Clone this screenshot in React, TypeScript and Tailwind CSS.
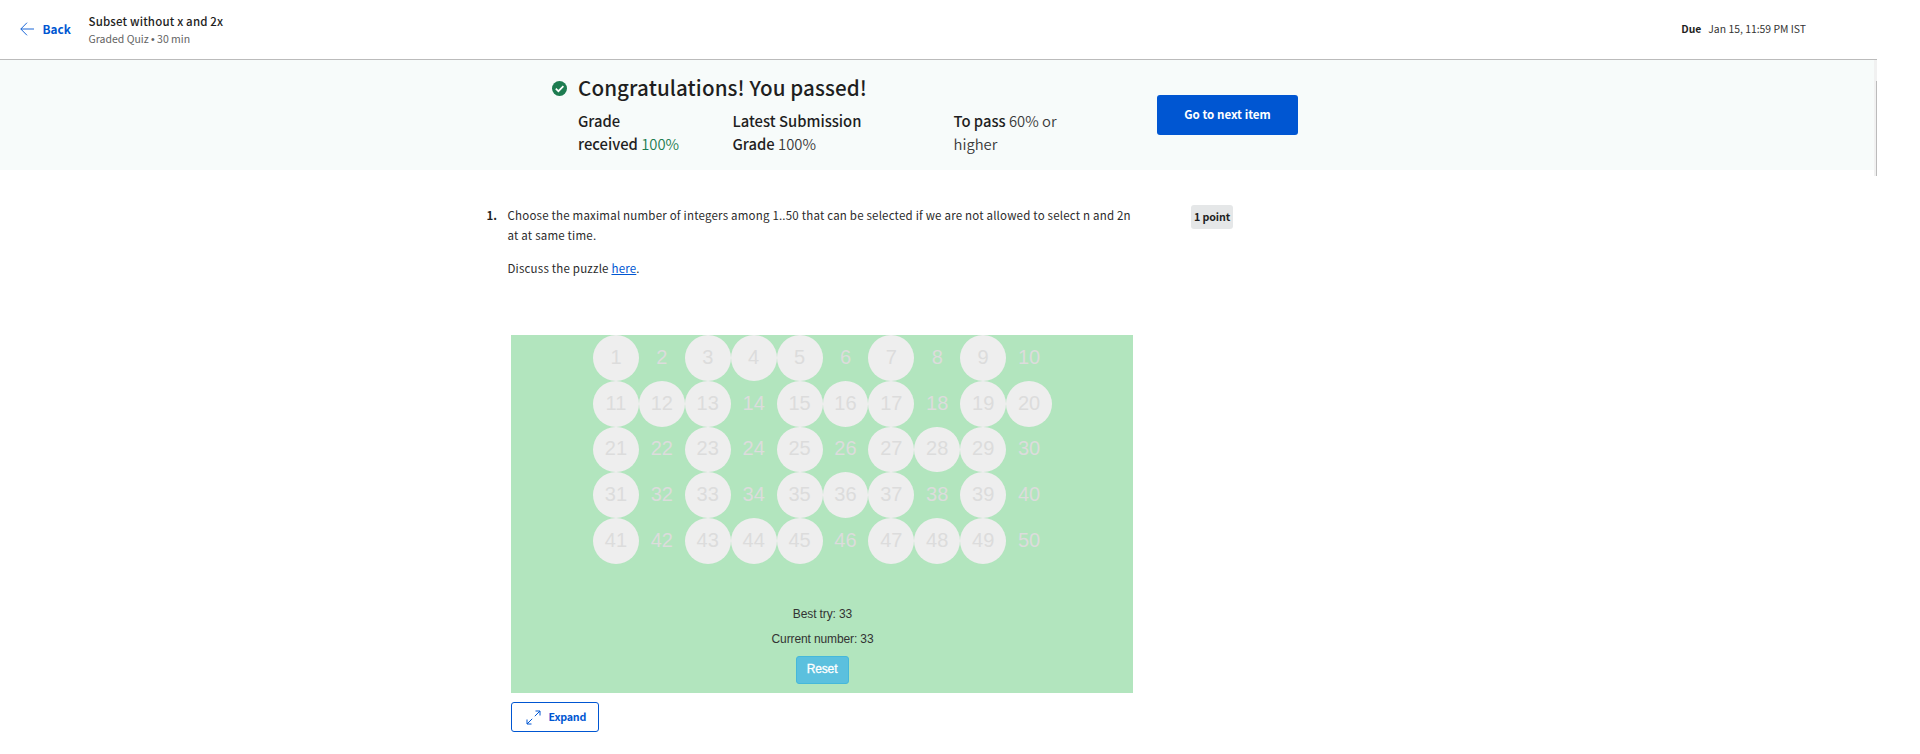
import React from "react";

const SELECTED = new Set([
  1, 3, 4, 5, 7, 9, 11, 12, 13, 15, 16, 17, 19, 20, 21, 23, 25, 27, 28, 29, 31,
  33, 35, 36, 37, 39, 41, 43, 44, 45, 47, 48, 49,
]);

const NUMBERS = Array.from({ length: 50 }, (_, i) => i + 1);

function Header() {
  return (
    <header className="flex h-[60px] w-[1877px] border-b border-[#bbbbbb]">
      <a className="flex h-[58px] w-[88px] items-center pl-5 text-[#0056d2]">
        <svg width="15" height="14" viewBox="0 0 15 14" fill="none" stroke="currentColor" strokeWidth="0.9">
          <path d="M14 7H0.8M7 0.7L0.8 7l6.2 6.3" />
        </svg>
        <span className="ml-[7.5px] text-[11.8px] font-bold leading-5">Back</span>
      </a>
      <div className="flex grow flex-col pl-[0.5px] pt-[11px]">
        <h1 className="text-[11.5px] font-medium leading-5 tracking-[0.16px]">Subset without x and 2x</h1>
        <p className="-mt-0.5 text-[10.5px] leading-5 text-[#636363]">
          Graded Quiz <span className="font-['Liberation_Sans',Arial,sans-serif]">•</span> 30 min
        </p>
      </div>
      <div className="flex gap-[7px] pr-[71px] pt-[19px] text-[10.4px] leading-5">
        <span className="font-bold">Due</span>
        <span className="text-[#333333]">Jan 15, 11:59 PM IST</span>
      </div>
    </header>
  );
}

function Banner() {
  return (
    <div className="flex h-[116px] w-[1877px]">
      <section className="flex h-[110px] w-[1874px] bg-[#f7fbfa] pl-[552px]">
        <svg className="mt-[21px]" width="15" height="15" viewBox="0 0 15 15">
          <circle cx="7.5" cy="7.5" r="7.5" fill="#1d7c50" />
          <path d="M3.8 7.7l2.6 2.5 5-5" fill="none" stroke="#fff" strokeWidth="1.7" />
        </svg>
        <div className="ml-[11px] w-[579px] pt-[11px]">
          <h2 className="text-[20.6px] font-medium leading-8 tracking-[0.1px]">Congratulations! You passed!</h2>
          <div className="mt-[6px] flex text-[14.8px] leading-[23px]">
            <p className="w-[154.5px]">
              <b className="font-medium">Grade<br />received</b>{" "}
              <span className="font-[350] text-[#1d7c50]">100%</span>
            </p>
            <p className="w-[221px]">
              <b className="font-medium">Latest Submission<br />Grade</b>{" "}
              <span className="font-[350] text-[#3a3a3a]">100%</span>
            </p>
            <p className="font-[350] text-[#3a3a3a]">
              <b className="font-medium text-[#1f1f1f]">To pass</b> 60% or<br />higher
            </p>
          </div>
        </div>
        <button className="mt-[35px] h-10 w-[141px] rounded-[3px] bg-[#0056d2] text-[11.6px] font-bold text-white">
          Go to next item
        </button>
      </section>
      <div className="flex w-[3px] justify-end bg-[#f1f1f1] pt-[21px]">
        <div className="w-px bg-[#bbbbbb]" />
      </div>
    </div>
  );
}

function Puzzle() {
  return (
    <div className="ml-[3.5px] mt-[57px] h-[358px] w-[622px] bg-[#b2e5be] font-['Liberation_Sans',Arial,sans-serif]">
      <div className="ml-[82px] grid w-[459px] grid-cols-10">
        {NUMBERS.map((n) => (
          <div
            key={n}
            className={`flex h-[45.8px] items-center justify-center rounded-full pb-[2px] text-[20px] text-[#dcdcdc] ${
              SELECTED.has(n) ? "bg-[#eeeeee]" : ""
            }`}
          >
            {n}
          </div>
        ))}
      </div>
      <div className="flex flex-col items-center pt-[38px] text-[12px] leading-[25px] tracking-[-0.12px] text-[#333333]">
        <p className="pl-px">Best try: 33</p>
        <p className="pl-px">Current number: 33</p>
        <button className="mt-1 flex h-7 w-[53px] items-center justify-center rounded-[3px] border border-[#46b8da] bg-[#5bc0de] text-[12px] text-white [-webkit-text-stroke:0.3px_white]">
          Reset
        </button>
      </div>
    </div>
  );
}

export default function App() {
  return (
    <div className="h-[754px] w-[1920px] overflow-hidden bg-white font-['Noto_Sans_CJK_SC',sans-serif] text-[#1f1f1f]">
      <Header />
      <Banner />
      <main className="flex pl-[486.5px] pt-[29px]">
        <span className="w-[21px] text-[11.5px] font-bold leading-5">1.</span>
        <div className="w-[683.5px]">
          <div className="text-[11.5px] leading-5 tracking-[0.2px] text-[#2b2b2b]">
            <p>
              Choose the maximal number of integers among 1..50 that can be selected if we are not allowed to select n and 2n<br />
              at at same time.
            </p>
            <p className="mt-[13px]">
              Discuss the puzzle <a className="text-[#0056d2] underline">here</a>.
            </p>
          </div>
          <Puzzle />
          <button className="ml-[3.5px] mt-[9px] flex h-[30px] w-[88px] items-center rounded-[3px] border border-[#0056d2] pl-[13.5px] text-[10.7px] font-bold tracking-[-0.2px] text-[#0056d2]">
            <svg width="15" height="15" viewBox="0 0 15 15" fill="none" stroke="currentColor" strokeWidth="1">
              <path d="M9.5 1h4.5v4.5M14 1L8.8 6.2M5.5 14H1V9.5M1 14l5.2-5.2" />
            </svg>
            <span className="ml-2">Expand</span>
          </button>
        </div>
        <span className="flex h-6 w-[42px] items-center justify-center rounded-[3px] bg-[#e5e7e8] text-[10.7px] font-bold tracking-[-0.1px]">
          1 point
        </span>
      </main>
    </div>
  );
}
